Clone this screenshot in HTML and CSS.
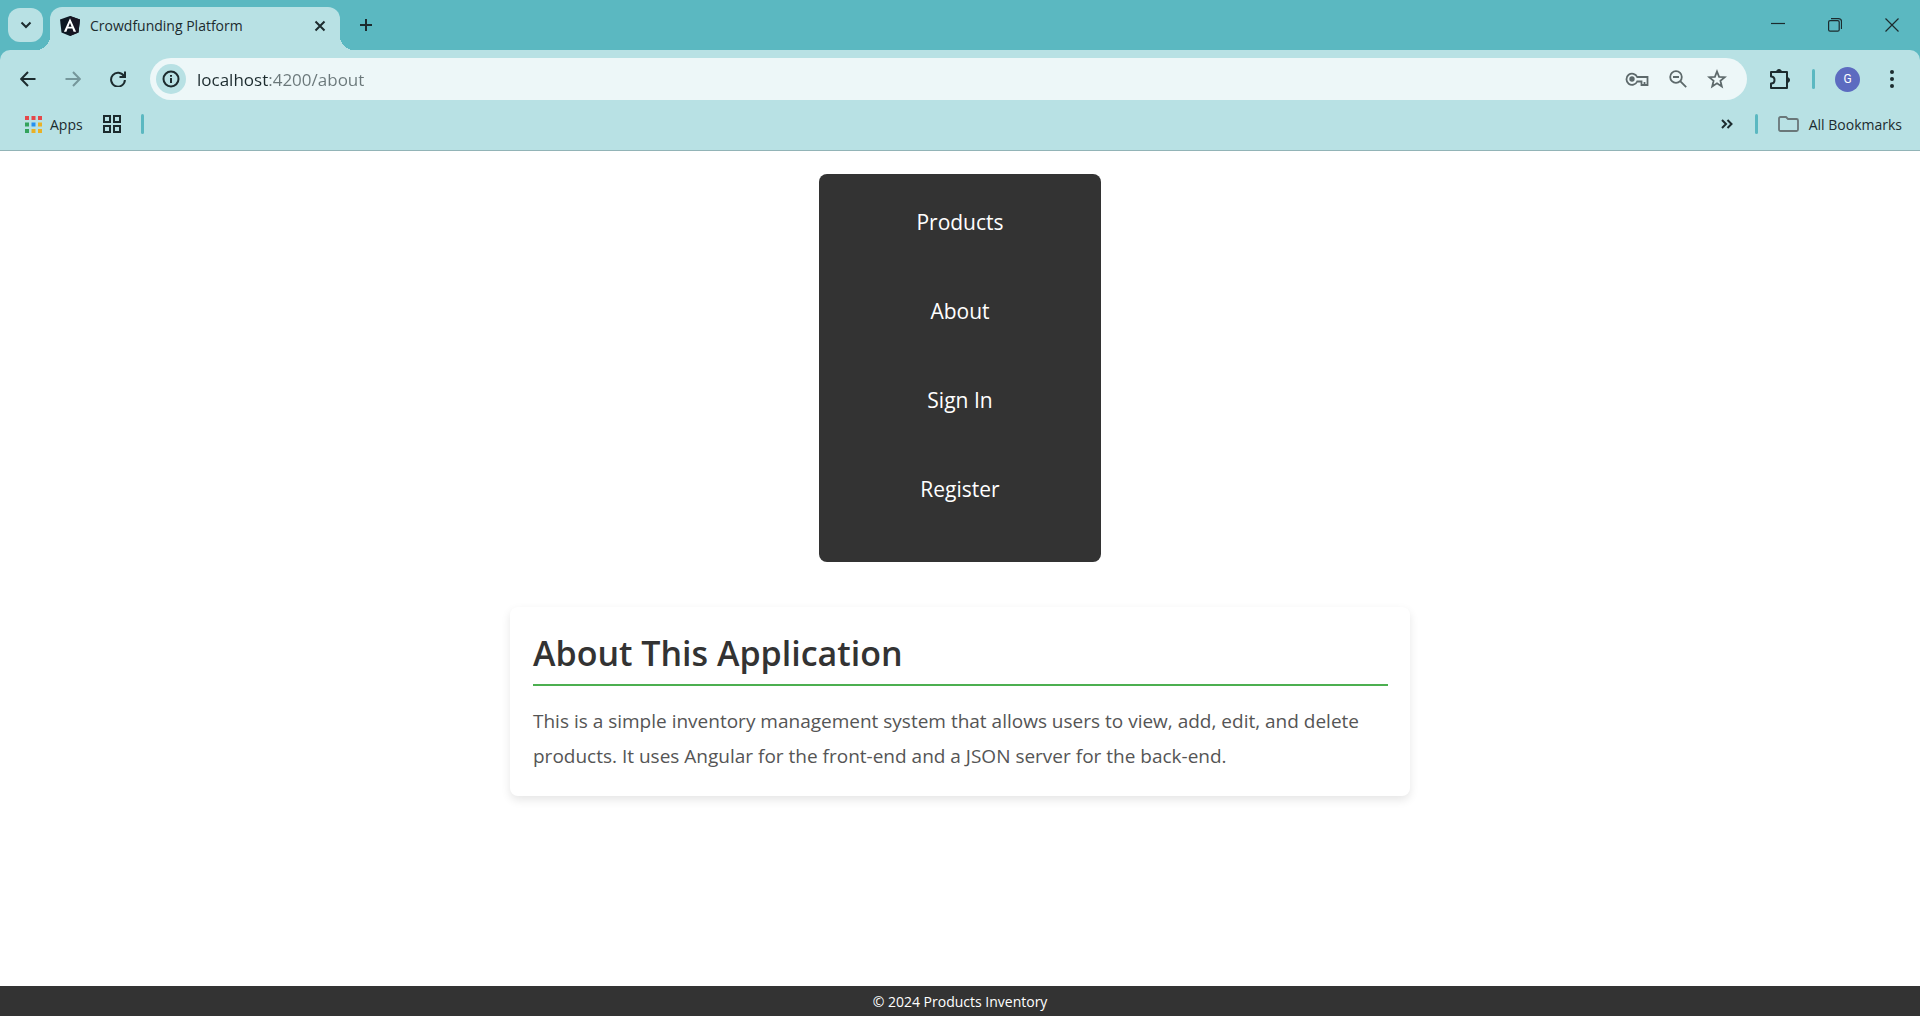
FILE: index.html
```html
<!DOCTYPE html>
<html lang="en">
<head>
<meta charset="utf-8">
<title>Crowdfunding Platform</title>
<link rel="stylesheet" href="styles.css">
</head>
<body>
<div class="window">
  <header class="chrome">
    <div class="tab-strip">
      <button class="tab-search" aria-label="Search tabs"><svg width="12" height="12" viewBox="0 0 12 12"><path d="M1.5 3.5 6 8l4.500-4.500" class="stroke bold"/></svg></button>
      <div class="tab">
        <svg class="favicon" width="20" height="20" viewBox="0 0 20 20"><path d="M10 0 20 3.500 18.500 16.500 10 20 1.500 16.500 0 3.500Z" fill="#0d1822"/><path d="M10 0 20 3.500 18.500 16.500 10 20Z" fill="#171522"/><path d="M10 2.200 3.900 15.700h2.500l1.200-3.100h4.800l1.200 3.100h2.500ZM10 6.800l1.600 3.900H8.400Z" fill="#fff" fill-rule="evenodd"/></svg>
        <span class="tab-title">Crowdfunding Platform</span>
        <button class="icon-button tab-close" aria-label="Close tab"><svg width="12" height="12" viewBox="0 0 12 12"><path d="m1.500 1.500 9 9m0-9-9 9" class="stroke bold"/></svg></button>
      </div>
      <button class="icon-button new-tab" aria-label="New tab"><svg width="14" height="14" viewBox="0 0 14 14"><path d="M7 1v12M1 7h12" class="stroke bold"/></svg></button>
      <div class="window-controls">
        <button class="icon-button" aria-label="Minimize"><svg width="14" height="14" viewBox="0 0 14 14"><path d="M0 5.500h14" class="stroke thin"/></svg></button>
        <button class="icon-button" aria-label="Restore"><svg width="14" height="14" viewBox="0 0 14 14"><rect x=".6" y="2.600" width="10.600" height="10.600" rx="1.500" class="stroke thin"/><path d="M3 .6h7.500a3 3 0 0 1 3 3V11" class="stroke thin"/></svg></button>
        <button class="icon-button" aria-label="Close"><svg width="14" height="14" viewBox="0 0 14 14"><path d="m.5.5 13 13m0-13-13 13" class="stroke thin"/></svg></button>
      </div>
    </div>
    <div class="panel">
      <div class="toolbar">
        <button class="icon-button" aria-label="Back"><svg width="16" height="16" viewBox="0 0 16 16"><path d="M15.500 8H2M8 1 1.200 8 8 15" class="stroke bold"/></svg></button>
        <button class="icon-button" aria-label="Forward" disabled><svg width="16" height="16" viewBox="0 0 16 16"><path d="M.5 8H14M8 1l6.800 7L8 15" class="stroke bold"/></svg></button>
        <button class="icon-button" aria-label="Reload"><svg width="16" height="16" viewBox="0 0 16 16"><path d="M14 5.300A6.900 6.900 0 1 0 14.900 9M15 .5v5.500H9.500" class="stroke bold"/></svg></button>
        <div class="omnibox">
          <button class="site-info" aria-label="View site information"><svg width="18" height="18" viewBox="0 0 18 18"><circle cx="9" cy="9" r="7.500" class="stroke bold"/><path d="M9 8v5M9 5v1.800" class="stroke bold"/></svg></button>
          <input class="address" type="text" aria-label="Address" value="localhost:4200/about">
          <button class="icon-button muted" aria-label="Passwords"><svg width="24" height="16" viewBox="0 0 24 16"><path d="M12.200 6A5.600 5.600 0 1 0 12.200 10.500H16.500v3.500h6V6Z" class="stroke"/><path d="M19.500 14v-3" class="stroke"/><circle cx="7" cy="8" r="2.700" fill="currentColor"/></svg></button>
          <button class="icon-button muted" aria-label="Zoom"><svg width="18" height="18" viewBox="0 0 18 18"><circle cx="7" cy="7" r="5.800" class="stroke"/><path d="m11.200 11.200 6 6M4 7h6" class="stroke"/></svg></button>
          <button class="icon-button muted" aria-label="Bookmark this page"><svg width="20" height="20" viewBox="0 0 20 20"><path d="m10 2.500 2.100 5.300 5.700.4-4.400 3.600 1.400 5.600-4.800-3.100-4.800 3.100 1.400-5.600-4.400-3.600 5.700-.4Z" class="stroke"/></svg></button>
        </div>
        <button class="icon-button extensions" aria-label="Extensions"><svg width="22" height="22" viewBox="0 0 22 22"><path d="M2 5.500V4h16v16H2V15.500C4 15.500 5.500 14 5.500 12S4 8.500 2 8.500Z" class="stroke bold" stroke-linejoin="round"/><path d="M7.500 4a2.500 2.500 0 0 1 5 0ZM18 9.500a2.500 2.500 0 0 1 0 5Z" fill="currentColor" stroke="currentColor"/></svg></button>
        <span class="divider"></span>
        <button class="avatar" aria-label="Profile">G</button>
        <button class="icon-button menu" aria-label="Menu"><svg width="6" height="20" viewBox="0 0 6 20" fill="currentColor"><circle cx="3" cy="3" r="2"/><circle cx="3" cy="10" r="2"/><circle cx="3" cy="17" r="2"/></svg></button>
      </div>
      <div class="bookmarks">
        <a class="bookmark" href="#"><svg width="17" height="17" viewBox="0 0 17 17"><path d="M0 0h4v4H0zM6.500 0h4v4h-4zM13 0h4v4h-4z" fill="#e5484a"/><path d="M0 6.500h4v4H0zM0 13h4v4H0z" fill="#33a35c"/><path d="M6.500 6.500h4v4h-4z" fill="#2690f0"/><path d="M13 6.500h4v4h-4zM6.500 13h4v4h-4zM13 13h4v4h-4z" fill="#e9b126"/></svg>Apps</a>
        <button class="icon-button tab-groups" aria-label="Tab groups"><svg width="18" height="18" viewBox="0 0 18 18"><path d="M1 1h6v6H1zM11 1h6v6h-6zM1 11h6v6H1zM11 11h6v6h-6z" class="stroke bold"/></svg></button>
        <span class="divider"></span>
        <button class="icon-button more" aria-label="More bookmarks"><svg width="12" height="10" viewBox="0 0 12 10"><path d="m1 1 4 4-4 4M6.500 1l4 4-4 4" class="stroke bold"/></svg></button>
        <span class="divider"></span>
        <a class="bookmark" href="#"><svg class="folder" width="21" height="16" viewBox="0 0 21 16"><path d="M1 13.500V2.500A1.500 1.500 0 0 1 2.500 1H8l2 2h8.500A1.500 1.500 0 0 1 20 4.500v9a1.500 1.500 0 0 1-1.500 1.500h-16A1.500 1.500 0 0 1 1 13.500Z" class="stroke"/></svg>All Bookmarks</a>
      </div>
    </div>
  </header>
  <main class="page">
    <nav class="site-nav">
      <a href="#">Products</a>
      <a href="#">About</a>
      <a href="#">Sign In</a>
      <a href="#">Register</a>
    </nav>
    <section class="about">
      <h1>About This Application</h1>
      <p>This is a simple inventory management system that allows users to view, add, edit, and delete products. It uses Angular for the front-end and a JSON server for the back-end.</p>
    </section>
  </main>
  <footer class="site-footer">© 2024 Products Inventory</footer>
</div>
</body>
</html>
```
FILE: styles.css
```css
* { box-sizing: border-box; }

body {
  margin: 0;
  background: #fff;
  color: #1c2b2e;
  font-family: "Segoe UI", "Open Sans", "Noto Sans", sans-serif;
  font-size: 14px;
}

button, input { font: inherit; color: inherit; border: 0; padding: 0; margin: 0; background: none; }
a { color: inherit; text-decoration: none; }
svg { display: block; flex: none; }

.window { min-height: 100vh; display: flex; flex-direction: column; }

/* Icon strokes */
.stroke { fill: none; stroke: currentColor; stroke-width: 1.8; }
.stroke.bold { stroke-width: 2; }
.stroke.thin { stroke-width: 1.2; }

.icon-button { flex: none; display: flex; align-items: center; justify-content: center; }
.icon-button:disabled { color: #75979b; }
.muted { color: #5d696b; }

/* Tab strip */
.chrome { background: #5bb8c1; }
.tab-strip { height: 50px; display: flex; padding-left: 8px; }
.tab-search {
  width: 35px;
  height: 34px;
  margin: 8px 7px 0 0;
  display: flex;
  align-items: center;
  justify-content: center;
  border-radius: 12px;
  background: #b8e1e4;
}
.tab {
  position: relative;
  width: 290px;
  margin-top: 7px;
  padding: 0 14px 6px 10px;
  display: flex;
  align-items: center;
  border-radius: 12px 12px 0 0;
  background: #b8e1e4;
}
.tab::before, .tab::after {
  content: "";
  position: absolute;
  bottom: 0;
  width: 14px;
  height: 14px;
}
.tab::before { right: 100%; background: radial-gradient(circle at 0 0, transparent 14px, #b8e1e4 14px); }
.tab::after { left: 100%; background: radial-gradient(circle at 100% 0, transparent 14px, #b8e1e4 14px); }
.tab-title { flex: 1; margin-left: 10px; }
.new-tab { width: 52px; }
.window-controls { margin-left: auto; display: flex; }
.window-controls .icon-button { width: 57px; }

/* Toolbar */
.panel { background: #b8e1e4; border-bottom: 1px solid #92b4b7; border-radius: 10px 10px 0 0; }
.toolbar { display: flex; align-items: center; padding: 8px 8px 0 5px; }
.toolbar > .icon-button { width: 45px; height: 42px; }
.omnibox {
  flex: 1;
  height: 42px;
  margin-left: 10px;
  padding: 0 20px 0 6px;
  display: flex;
  align-items: center;
  gap: 20px;
  border-radius: 21px;
  background: #edf7f8;
}
.site-info {
  width: 30px;
  height: 30px;
  margin-right: -9px;
  display: flex;
  align-items: center;
  justify-content: center;
  border-radius: 50%;
  background: #b8e1e4;
}
/* The host name is drawn darker than the rest of the address */
.address {
  flex: 1;
  min-width: 0;
  font-size: 17px;
  background: linear-gradient(to right, #1c2b2e 71px, #6a7779 71px);
  background-clip: text;
  -webkit-text-fill-color: transparent;
  outline: 0;
}
.divider { flex: none; width: 3px; height: 20px; border-radius: 2px; background: #5bb8c1; }
.toolbar .extensions { width: 65px; }
.avatar {
  width: 25px;
  height: 25px;
  margin: 0 12px 0 20px;
  border-radius: 50%;
  background: #5c6bc0;
  color: #fff;
  font-family: Roboto, sans-serif;
  font-size: 12px;
}
.toolbar .menu { width: 40px; }

/* Bookmarks bar */
.bookmarks { height: 50px; display: flex; align-items: center; padding: 0 18px 2px 25px; }
.bookmark { display: flex; align-items: center; gap: 8px; }
.tab-groups { width: 58px; }
.more { margin-left: auto; width: 56px; }
.more + .divider { margin-right: 20px; }
.folder { color: #6a7779; margin-right: 2px; }

/* Page */
.page { flex: 1; padding: 23px 20px; }
.site-nav {
  width: 282px;
  margin: 0 auto;
  padding: 16px 0 40px;
  border-radius: 8px;
  background: #333;
  color: #fff;
  font-size: 21px;
  line-height: 29px;
  text-align: center;
}
.site-nav a { display: block; padding: 18px 20px; margin-bottom: 24px; }
.site-nav a:last-child { margin-bottom: 0; }
.about {
  max-width: 900px;
  margin: 45px auto 0;
  padding: 23px 22px 22px 23px;
  border-radius: 8px;
  background: #fff;
  box-shadow: 0 4px 10px rgba(0, 0, 0, 0.1);
}
.about h1 {
  margin: 0 0 18px;
  padding-bottom: 8px;
  border-bottom: 2px solid #4caf50;
  color: #333;
  font-size: 34px;
  font-weight: 600;
  line-height: 46px;
}
.about p { margin: 0; color: #555; font-size: 19px; line-height: 35px; }

.site-footer {
  height: 30px;
  background: #333;
  color: #fff;
  font-size: 14px;
  line-height: 32px;
  text-align: center;
}
```
